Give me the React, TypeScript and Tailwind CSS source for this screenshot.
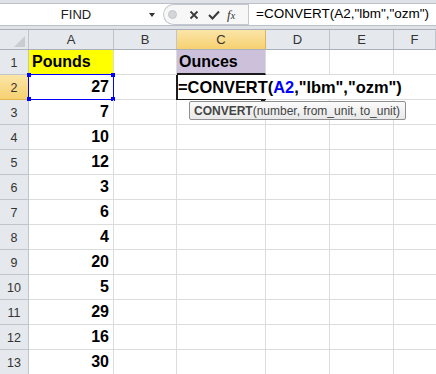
import React from "react";

const cols = [
  { k: "A", w: "w-[85px]" },
  { k: "B", w: "w-[63px]" },
  { k: "C", w: "w-[89px]" },
  { k: "D", w: "w-[64px]" },
  { k: "E", w: "w-[64px]" },
  { k: "F", w: "flex-1" },
];

const values = [null, 27, 7, 10, 12, 3, 6, 4, 20, 5, 29, 16, 30];

export default function App() {
  const ff = { fontFamily: '"Liberation Sans", Arial, sans-serif' };
  return (
    <div className="w-[436px] h-[374px] overflow-hidden bg-white relative" style={ff}>
      {/* formula bar */}
      <div className="h-[4px] bg-[#dfe3e8] border-b border-[#b9c0c9]" />
      <div className="h-[22px] flex bg-white border-b border-[#b9c0c9]">
        <div className="w-[163px] pl-[3px] flex items-center relative">
          <div className="flex-1 text-center text-[13px] text-[#222] pl-[4px]">FIND</div>
          <div className="w-[14px] flex items-center justify-center mr-[4px]">
            <div className="w-0 h-0 border-l-[3.5px] border-r-[3.5px] border-t-[4px] border-l-transparent border-r-transparent border-t-[#333]" />
          </div>
        </div>
        <div className="w-[85px] flex items-center bg-[#f7f7f7] border border-[#c4c8ce] rounded-l-[12px] border-r-0 relative">
          <div className="w-[9px] h-[9px] rounded-full bg-[#d3d5d8] border border-[#c3c6ca] ml-[4px]" />
          <svg width="10" height="10" viewBox="0 0 10 10" className="ml-[12px]">
            <path d="M1.5 1.5 L8.5 8.5 M8.5 1.5 L1.5 8.5" stroke="#3a3a3a" strokeWidth="1.8" />
          </svg>
          <svg width="12" height="10" viewBox="0 0 12 10" className="ml-[9px]">
            <path d="M1 5 L4.5 8.5 L11 1.5" stroke="#3a3a3a" strokeWidth="2" fill="none" />
          </svg>
          <span
            className="ml-[7px] text-[13px] italic text-[#333] leading-none"
            style={{ fontFamily: '"Liberation Serif", "Times New Roman", serif' }}
          >
            f<span className="text-[10px]">x</span>
          </span>
        </div>
        <div className="flex-1 flex items-center pl-[7px] text-[13.5px] text-black border-l border-[#c4c8ce]">
          =CONVERT(A2,"lbm","ozm")
        </div>
      </div>
      <div className="h-[3px] bg-[#dfe3e8]" />
      {/* column headers */}
      <div className="h-[21px] flex border-t border-b border-[#a9b0b9] bg-[#e5e8ec]">
        <div className="w-[29px] border-r border-[#c0c5cc] relative">
          <svg className="absolute right-[3px] bottom-[2px]" width="11" height="11" viewBox="0 0 11 11">
            <path d="M11 0 L11 11 L0 11 Z" fill="#c9cdd3" />
          </svg>
        </div>
        {cols.map((c) => (
          <div
            key={c.k}
            className={`${c.w} ${
              c.k === "C"
                ? "bg-gradient-to-b from-[#fbe5a7] to-[#f7d170] border-r-[#e2b453]"
                : "border-r-[#c0c5cc]"
            } border-r flex items-center justify-center text-[13px] text-[#333]`}
          >
            {c.k}
          </div>
        ))}
      </div>
      {/* rows */}
      {values.map((v, i) => {
        const r = i + 1;
        return (
          <div key={r} className="h-[25px] flex">
            <div
              className={`w-[29px] border-r border-b ${
                r === 2
                  ? "bg-gradient-to-b from-[#fbe5a7] to-[#f7d170] border-[#e2b453]"
                  : "bg-[#e5e8ec] border-[#c0c5cc]"
              } flex items-center justify-center text-[12.5px] text-[#333] pt-[2px]`}
            >
              {r}
            </div>
            {/* A */}
            <div
              className={`w-[85px] border-r border-b border-[#dadcdd] flex items-center text-[16px] font-bold text-black relative ${
                r === 1 ? "bg-[#ffff00] justify-start pl-[3px]" : "justify-end pr-[4px]"
              }`}
            >
              {r === 1 ? "Pounds" : v}
              {r === 2 && (
                <>
                  <div className="absolute left-[-1px] top-[-1px] right-[-1px] bottom-[-1px] border border-[#0000ff]" />
                  <div className="absolute left-[-2px] top-[-2px] w-[4px] h-[4px] bg-[#0000ff]" />
                  <div className="absolute right-[-2px] top-[-2px] w-[4px] h-[4px] bg-[#0000ff]" />
                  <div className="absolute left-[-2px] bottom-[-2px] w-[4px] h-[4px] bg-[#0000ff]" />
                  <div className="absolute right-[-2px] bottom-[-2px] w-[4px] h-[4px] bg-[#0000ff]" />
                </>
              )}
            </div>
            {/* B */}
            <div className="w-[63px] border-r border-b border-[#dadcdd]" />
            {/* C */}
            <div
              className={`w-[89px] border-b border-r flex items-center text-[16px] font-bold text-black relative ${
                r === 1
                  ? "bg-[#ccc0da] border-b-[#1a1a1a] border-r-[#dadcdd] border-b-2 pl-[2px]"
                  : r === 2
                  ? "border-transparent"
                  : "border-[#dadcdd]"
              }`}
            >
              {r === 1 && "Ounces"}
              {r === 2 && (
                <>
                  <div className="absolute left-[-1px] top-0 bottom-[-1px] w-[2px] bg-[#1a1a1a]" />
                  <div className="absolute left-[-1px] bottom-[-1px] w-[87px] h-[2px] bg-[#1a1a1a]" />
                  <div className="absolute right-[-1px] bottom-[-3px] w-[5px] h-[5px] bg-[#1a1a1a]" />
                  <div className="absolute left-[1px] top-0 bottom-0 flex items-center whitespace-nowrap z-10 bg-white pr-[2px] text-[16.4px]">
                    =CONVERT(<span className="text-[#0000ff]">A2</span>,"lbm","ozm")
                  </div>
                </>
              )}
            </div>
            <div className="w-[64px] border-r border-b border-[#dadcdd]" />
            <div className="w-[64px] border-r border-b border-[#dadcdd]" />
            <div className="flex-1 border-b border-[#dadcdd]" />
          </div>
        );
      })}
      {/* tooltip */}
      <div className="absolute left-[189px] top-[101px] h-[19px] w-[217px] border border-[#8f8f8f] rounded-[2px] bg-gradient-to-b from-[#fbfbfb] to-[#e8e8e8] flex items-center pl-[4px] text-[12px] text-[#444] whitespace-nowrap">
        <span className="font-bold">CONVERT</span>(number, from_unit, to_unit)
      </div>
    </div>
  );
}
